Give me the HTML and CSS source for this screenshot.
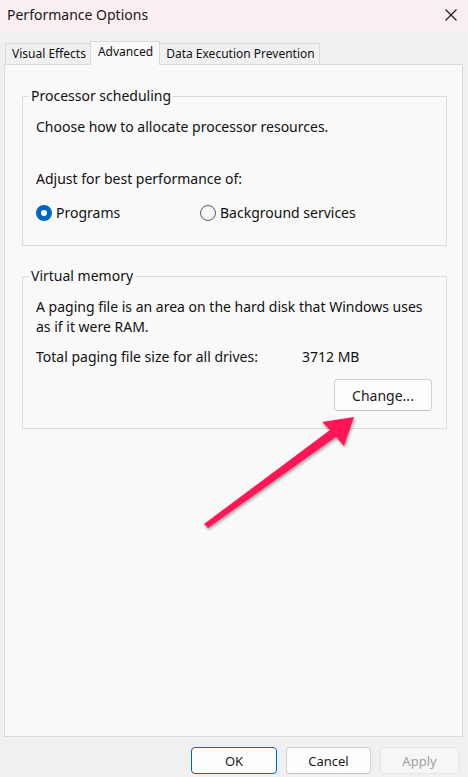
FILE: index.html
```html
<!DOCTYPE html>
<html>
<head>
<meta charset="utf-8">
<link rel="stylesheet" href="styles.css">
</head>
<body>
<div class="window">
  <div class="titlebar">
    <span class="title">Performance Options</span>
    <svg class="close" width="12" height="12" viewBox="0 0 12 12"><path d="M0.5 0.5 L11.5 11.5 M11.5 0.5 L0.5 11.5" stroke="#1a1a1a" stroke-width="1.1" fill="none"/></svg>
  </div>
  <div class="content">
    <div class="tabs">
      <div class="tab">Visual Effects</div>
      <div class="tab active">Advanced</div>
      <div class="tab">Data Execution Prevention</div>
    </div>
    <div class="panel">
      <fieldset class="group proc">
        <legend>Processor scheduling</legend>
        <div class="line">Choose how to allocate processor resources.</div>
        <div class="line adjust">Adjust for best performance of:</div>
        <div class="radios">
          <label class="radio"><span class="dot checked"></span>Programs</label>
          <label class="radio bg"><span class="dot"></span>Background services</label>
        </div>
      </fieldset>
      <fieldset class="group vm">
        <legend>Virtual memory</legend>
        <div class="line nowrap">A paging file is an area on the hard disk that Windows uses<br>as if it were RAM.</div>
        <div class="line total"><span class="lbl">Total paging file size for all drives:</span><span>3712 MB</span></div>
        <div class="btnrow"><button class="btn change">Change...</button></div>
      </fieldset>
    </div>
    <div class="footer">
      <button class="btn ok">OK</button>
      <button class="btn cancel">Cancel</button>
      <button class="btn apply">Apply</button>
    </div>
  </div>
  <svg class="arrow" width="468" height="777" viewBox="0 0 468 777">
    <defs>
      <filter id="sh" x="-10%" y="-10%" width="130%" height="130%">
        <feDropShadow dx="1" dy="2" stdDeviation="1.5" flood-color="#000" flood-opacity="0.35"/>
      </filter>
    </defs>
    <polygon filter="url(#sh)" fill="#ff1457" points="204,524 330,430 322,422 354,417 344,446 336,437 208,528"/>
  </svg>
</div>
</body>
</html>
```
FILE: styles.css
```css
* { box-sizing: border-box; }
html, body { margin: 0; padding: 0; }
body {
  width: 468px;
  height: 777px;
  font-family: "Noto Sans", "Open Sans", sans-serif;
  color: #1a1a1a;
  background: #f0f0f0;
  overflow: hidden;
}
.window {
  position: relative;
  width: 468px;
  height: 777px;
  display: flex;
  flex-direction: column;
}
.titlebar {
  height: 33px;
  background: #f9eef0;
  display: flex;
  align-items: center;
  justify-content: space-between;
  padding: 0 11px 0 7px;
}
.title {
  font-size: 14px;
  color: #1a1a1a;
  margin-top: -4px;
}
.close { margin-top: -4px; }
.content {
  flex: 1;
  display: flex;
  flex-direction: column;
  padding: 8px 5px 0 4px;
}
.tabs {
  display: flex;
  align-items: flex-end;
  height: 23px;
  padding-left: 1px;
  position: relative;
  z-index: 1;
}
.tab {
  height: 21px;
  border: 1px solid #dadada;
  border-bottom: none;
  background: #f0f0f0;
  font-size: 12px;
  line-height: 20px;
  padding: 0 4px 0 6px;
  color: #111;
}
.tab + .tab { margin-left: -1px; }
.tab.active {
  height: 24px;
  background: #f9f9f9;
  line-height: 20px;
  margin-bottom: -1px;
  padding: 0 6px 0 7px;
}
.panel {
  height: 673px;
  background: #f9f9f9;
  border: 1px solid #dcdcdc;
  padding: 21px 15px 0 17px;
}
.group {
  margin: 0;
  border: 1px solid #dcdcdc;
  padding: 11px 14px 22px 13px;
  font-size: 14px;
  line-height: 20px;
  color: #111;
}
.group legend {
  padding: 0 2px;
  margin-left: -7px;
  line-height: 20px;
  font-size: 14px;
}
.nowrap { white-space: nowrap; }
.adjust { margin-top: 32px; }
.radios {
  display: flex;
  margin-top: 14px;
}
.radio {
  display: flex;
  align-items: center;
  gap: 4px;
  width: 164px;
}
.dot {
  width: 16px;
  height: 16px;
  border-radius: 50%;
  border: 1px solid #5e5e5e;
  background: #f6f6f6;
  display: inline-block;
  flex: none;
}
.dot.checked {
  border: 5px solid #0067c0;
  background: #fff;
}
.vm { margin-top: 20px; padding-bottom: 17px; }
.total {
  margin-top: 10px;
  display: flex;
}
.total .lbl { width: 266px; }
.btnrow {
  display: flex;
  justify-content: flex-end;
  margin-top: 12px;
}
.btn {
  font-family: "Noto Sans", "Open Sans", sans-serif;
  font-size: 13px;
  color: #1a1a1a;
  background: #fdfdfd;
  border: 1px solid #d0d0d0;
  border-bottom-color: #c2c2c2;
  border-radius: 4px;
  padding: 0;
  height: 27px;
}
.change {
  width: 98px;
  height: 32px;
  font-size: 14px;
}
.footer {
  display: flex;
  justify-content: flex-end;
  gap: 9px;
  padding: 10px 4px 0 0;
}
.ok {
  width: 86px;
  border: 1.5px solid #0067c0;
}
.cancel { width: 85px; }
.apply {
  width: 79px;
  background: #f6f6f6;
  border-color: #e6e6e6;
  color: #a0a0a0;
}
.arrow {
  position: absolute;
  left: 0;
  top: 0;
  pointer-events: none;
}
```
